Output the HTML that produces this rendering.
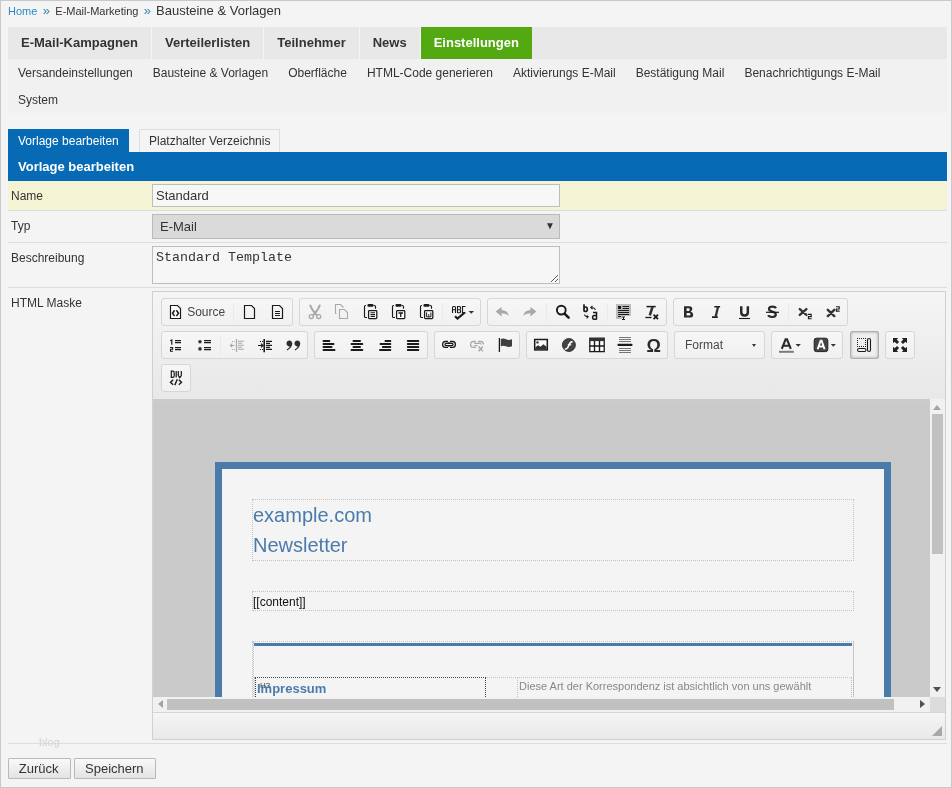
<!DOCTYPE html>
<html><head><meta charset="utf-8"><title>Bausteine &amp; Vorlagen</title>
<style>
*{box-sizing:border-box;margin:0;padding:0}
html,body{width:952px;height:788px;overflow:hidden}
body{font-family:"Liberation Sans",sans-serif;background:#f4f4f4;color:#333;position:relative}
#wrap{position:absolute;left:0;top:0;width:952px;height:788px;will-change:transform}
.a{position:absolute}
.t{position:absolute;white-space:nowrap;line-height:1}
#frame{left:0;top:0;width:952px;height:788px;border:1px solid #c9c9c9;pointer-events:none;z-index:50}
/* breadcrumb */
.bc{font-size:11px;top:5.7px}
.bc a{color:#2d8ac8;text-decoration:none}
/* main nav */
#nav{left:8px;top:27px;width:939px;height:32px;background:#e8e8e8}
#nav div{float:left;height:32px;padding:0 13px;border-right:1px solid #f4f4f4;font-weight:bold;font-size:13px;line-height:32px;color:#333}
#nav div.on{background:#52a912;color:#fff;border-right:0}
#sub{left:8px;top:59px;width:939px;height:54px;background:#f1f1f1}
#sub div{float:left;padding:0 10px;font-size:12px;height:27px;line-height:27px;color:#333;position:relative;top:1px}
/* tabs */
.tab{top:129px;height:24px;font-size:12px;line-height:23px;padding:0 9px;border:1px solid #ddd;border-bottom:0;color:#333;background:#f4f4f4}
.tab.on{background:#066bb4;border-color:#066bb4;color:#fff}
#hdr{left:8px;top:152px;width:939px;height:29px;background:#066bb4;color:#fff;font-weight:bold;font-size:13px}
.row{left:8px;width:939px;border-bottom:1px solid #ddd}
.lbl{font-size:12px;left:11px}
.inp{left:152px;width:408px;border:1px solid #bdbdbd;background:#f6f6f6}
.btn{border:1px solid #b9b9b9;border-radius:1px;background:linear-gradient(#f9f9f9,#e3e3e3)}
.db{border:1px dotted #c4c4c4}
.g{position:absolute;height:28px;border:1px solid #d6d6d6;border-radius:3px;background:linear-gradient(#f6f6f6,#f1f1f1)}
.ic{position:absolute;height:16px;line-height:0}
.ic svg{display:block}
.sp{position:absolute;width:1px;height:18px;background:#e9e9e9}
</style></head><body><div id="wrap">
<div id="frame" class="a"></div>

<!-- breadcrumb -->
<div class="t bc" style="left:8px"><a>Home</a></div>
<div class="t" style="left:42.7px;top:4px;font-size:13px;color:#3584b8">&raquo;</div>
<div class="t bc" style="left:55.3px;color:#333">E-Mail-Marketing</div>
<div class="t" style="left:143.8px;top:4px;font-size:13px;color:#3584b8">&raquo;</div>
<div class="t" style="left:156px;top:4px;font-size:13px;color:#333">Bausteine &amp; Vorlagen</div>

<!-- main nav -->
<div id="nav" class="a">
  <div>E-Mail-Kampagnen</div><div>Verteilerlisten</div><div>Teilnehmer</div><div>News</div><div class="on">Einstellungen</div>
</div>
<div id="sub" class="a">
  <div>Versandeinstellungen</div><div>Bausteine &amp; Vorlagen</div><div>Oberfläche</div><div>HTML-Code generieren</div><div>Aktivierungs E-Mail</div><div>Bestätigung Mail</div><div>Benachrichtigungs E-Mail</div><div>System</div>
</div>

<!-- tabs -->
<div class="a tab on" style="left:8px">Vorlage bearbeiten</div>
<div class="a tab" style="left:139px">Platzhalter Verzeichnis</div>
<div id="hdr" class="a"><span class="t" style="left:10px;top:8px">Vorlage bearbeiten</span></div>

<!-- form rows -->
<div class="a row" style="top:181px;height:30px;background:#f4f4d4;border-bottom-color:#ddd"></div>
<div class="a row" style="top:211px;height:32px"></div>
<div class="a row" style="top:243px;height:45px"></div>
<div class="a row" style="top:288px;height:456px"></div>
<div class="t lbl" style="top:189.5px">Name</div>
<div class="t lbl" style="top:219.5px">Typ</div>
<div class="t lbl" style="top:251.5px">Beschreibung</div>
<div class="t lbl" style="top:296.5px">HTML Maske</div>

<div class="a inp" style="top:184px;height:23px;background:#f7f7f7"></div>
<div class="t" style="left:156px;top:189px;font-size:13px">Standard</div>
<div class="a inp" style="top:214px;height:25px;background:#dadada;border-color:#bababa"></div>
<div class="t" style="left:160px;top:220px;font-size:13px">E-Mail</div>
<div class="t" style="left:545px;top:220.5px;font-size:10px;color:#333">&#9660;</div>
<div class="a inp" style="top:246px;height:38px"></div>
<div class="t" style="left:156px;top:251px;font-size:13.333px;font-family:'Liberation Mono',monospace">Standard Template</div>
<svg class="a" style="left:550px;top:274px" width="10" height="10" viewBox="0 0 10 10" shape-rendering="crispEdges"><rect x="2" y="7" width="1" height="1" fill="#fff"/><rect x="1" y="8" width="1" height="1" fill="#fff"/><rect x="3" y="6" width="1" height="1" fill="#fff"/><rect x="2" y="7" width="1" height="1" fill="#fff"/><rect x="4" y="5" width="1" height="1" fill="#fff"/><rect x="3" y="6" width="1" height="1" fill="#fff"/><rect x="5" y="4" width="1" height="1" fill="#fff"/><rect x="4" y="5" width="1" height="1" fill="#fff"/><rect x="6" y="3" width="1" height="1" fill="#fff"/><rect x="5" y="4" width="1" height="1" fill="#fff"/><rect x="7" y="2" width="1" height="1" fill="#fff"/><rect x="6" y="3" width="1" height="1" fill="#fff"/><rect x="8" y="1" width="1" height="1" fill="#fff"/><rect x="7" y="2" width="1" height="1" fill="#fff"/><rect x="6" y="7" width="1" height="1" fill="#fff"/><rect x="5" y="8" width="1" height="1" fill="#fff"/><rect x="7" y="6" width="1" height="1" fill="#fff"/><rect x="6" y="7" width="1" height="1" fill="#fff"/><rect x="8" y="5" width="1" height="1" fill="#fff"/><rect x="7" y="6" width="1" height="1" fill="#fff"/><rect x="1" y="7" width="1" height="1" fill="#555"/><rect x="2" y="6" width="1" height="1" fill="#555"/><rect x="3" y="5" width="1" height="1" fill="#555"/><rect x="4" y="4" width="1" height="1" fill="#555"/><rect x="5" y="3" width="1" height="1" fill="#555"/><rect x="6" y="2" width="1" height="1" fill="#555"/><rect x="7" y="1" width="1" height="1" fill="#555"/><rect x="5" y="7" width="1" height="1" fill="#555"/><rect x="6" y="6" width="1" height="1" fill="#555"/><rect x="7" y="5" width="1" height="1" fill="#555"/></svg>

<!-- editor -->
<div class="a" style="left:152px;top:291px;width:794px;height:449px;border:1px solid #d0d0d0;background:#f0f0f0"></div>
<div class="a" style="left:153px;top:292px;width:792px;height:107px;background:linear-gradient(#f5f5f5,#e8e8e8 99%,#ececec)"></div>
<!--TB-->
<div class="g" style="left:161px;top:298px;width:132px;"></div>
<div class="ic" style="left:168px;top:304px;width:16px"><svg width="16" height="16" viewBox="0 0 16 16" shape-rendering="geometricPrecision"><path d="M2.5 1.5H9.5L12.5 4.5V14.5H2.5Z" fill="#fff" stroke="#1a1a1a" stroke-width="1.2"/><path d="M6.6 6.3L4.5 9.2L6.6 12.1M8.4 6.3L10.5 9.2L8.4 12.1" fill="none" stroke="#1a1a1a" stroke-width="1.5"/></svg></div>
<div class="t" style="left:187.2px;top:306px;font-size:12px;color:#474747">Source</div>
<div class="sp" style="left:233px;top:303px"></div>
<div class="ic" style="left:242px;top:304px;width:16px"><svg width="16" height="16" viewBox="0 0 16 16" shape-rendering="geometricPrecision"><path d="M2.5 1.5H9.5L12.5 4.5V14.5H2.5Z" fill="none" stroke="#1a1a1a" stroke-width="1.2"/></svg></div>
<div class="ic" style="left:270px;top:304px;width:16px"><svg width="16" height="16" viewBox="0 0 16 16" shape-rendering="geometricPrecision"><path d="M2.5 1.5H9.5L12.5 4.5V14.5H2.5Z" fill="none" stroke="#1a1a1a" stroke-width="1.2"/><path d="M5 7.5H10M5 9.5H10M5 11.5H10" stroke="#1a1a1a" stroke-width="1.1"/></svg></div>
<div class="g" style="left:299px;top:298px;width:182px;"></div>
<div class="ic" style="left:306px;top:304px;width:16px"><svg width="16" height="16" viewBox="0 0 16 16" shape-rendering="geometricPrecision"><path d="M4.3 1.5L6 5L8.5 8.6L10.5 10.8M13.7 1.5L12 5L9.5 8.6L7.5 10.8" stroke="#a9a9a9" stroke-width="2" fill="none" stroke-linecap="round"/><circle cx="5.3" cy="12.6" r="2" fill="#f4f4f4" stroke="#a9a9a9" stroke-width="1.4"/><circle cx="12.7" cy="12.6" r="2" fill="#f4f4f4" stroke="#a9a9a9" stroke-width="1.4"/></svg></div>
<div class="ic" style="left:334px;top:304px;width:16px"><svg width="16" height="16" viewBox="0 0 16 16" shape-rendering="geometricPrecision"><path d="M2.5 9.5H1.5V0.5H6.5L9.5 3.5" fill="none" stroke="#a9a9a9" stroke-width="1.1"/><path d="M5.5 14.5V5.5H10.5L13.5 8.5V14.5Z" fill="none" stroke="#a9a9a9" stroke-width="1.1"/></svg></div>
<div class="ic" style="left:362px;top:304px;width:16px"><svg width="16" height="16" viewBox="0 0 16 16" shape-rendering="geometricPrecision"><path d="M4 1.5H3.6Q2.5 1.5 2.5 2.6V12.4Q2.5 13.5 3.6 13.5H5M11.8 1.5H12.4Q13.5 1.5 13.5 2.6V4.8" fill="none" stroke="#1a1a1a" stroke-width="1.15"/><rect x="5.4" y="0" width="6.2" height="2.7" rx="1.3" fill="#1a1a1a"/><rect x="6.6" y="6.6" width="8.2" height="8" rx="0.8" fill="#fff" stroke="#1a1a1a" stroke-width="1.25"/><path d="M8.5 8.8H13M8.5 10.6H13M8.5 12.4H13" stroke="#1a1a1a" stroke-width="1.05"/></svg></div>
<div class="ic" style="left:390px;top:304px;width:16px"><svg width="16" height="16" viewBox="0 0 16 16" shape-rendering="geometricPrecision"><path d="M4 1.5H3.6Q2.5 1.5 2.5 2.6V12.4Q2.5 13.5 3.6 13.5H5M11.8 1.5H12.4Q13.5 1.5 13.5 2.6V4.8" fill="none" stroke="#1a1a1a" stroke-width="1.15"/><rect x="5.4" y="0" width="6.2" height="2.7" rx="1.3" fill="#1a1a1a"/><rect x="6.6" y="6.6" width="8.2" height="8" rx="0.8" fill="#fff" stroke="#1a1a1a" stroke-width="1.25"/><path d="M8.5 9H13M10.75 9V13" stroke="#1a1a1a" stroke-width="1.3"/></svg></div>
<div class="ic" style="left:418px;top:304px;width:16px"><svg width="16" height="16" viewBox="0 0 16 16" shape-rendering="geometricPrecision"><path d="M4 1.5H3.6Q2.5 1.5 2.5 2.6V12.4Q2.5 13.5 3.6 13.5H5M11.8 1.5H12.4Q13.5 1.5 13.5 2.6V4.8" fill="none" stroke="#1a1a1a" stroke-width="1.15"/><rect x="5.4" y="0" width="6.2" height="2.7" rx="1.3" fill="#1a1a1a"/><rect x="6.6" y="6.6" width="8.2" height="8" rx="0.8" fill="#fff" stroke="#1a1a1a" stroke-width="1.25"/><path d="M8.6 8.4V12.9H12.9V8.4M10.75 10.2V12.9" fill="none" stroke="#1a1a1a" stroke-width="1"/></svg></div>
<div class="sp" style="left:442px;top:303px"></div>
<div class="ic" style="left:451px;top:304px;width:24px"><svg width="24" height="16" viewBox="0 0 24 16" shape-rendering="geometricPrecision"><path d="M1.5 9V3.5Q1.5 2.5 2.5 2.5H3.5Q4.5 2.5 4.5 3.5V9M1.5 5.8H4.5" fill="none" stroke="#1a1a1a" stroke-width="1.1"/><path d="M6.5 9V2.5H8.5Q9.5 2.5 9.5 3.5V4.6Q9.5 5.7 8.5 5.7H6.5M8.5 5.7Q9.5 5.7 9.5 6.8V8Q9.5 8.8 8.5 8.8H6.5" fill="none" stroke="#1a1a1a" stroke-width="1.1"/><path d="M14.5 2.5H11.5V8.8H14.5" fill="none" stroke="#1a1a1a" stroke-width="1.1"/><path d="M4 12.3L6.5 14.6L13.8 8.5" fill="none" stroke="#1a1a1a" stroke-width="2.1"/><path d="M17.5 7H23L20.25 9.7Z" fill="#333"/></svg></div>
<div class="g" style="left:487px;top:298px;width:180px;"></div>
<div class="ic" style="left:494px;top:304px;width:16px"><svg width="16" height="16" viewBox="0 0 16 16" shape-rendering="geometricPrecision"><path d="M1.5 7.6L7.6 3V6Q13.5 6.2 14.8 11.8Q12.5 9.2 7.6 9.3V12.6Z" fill="#a9a9a9"/></svg></div>
<div class="ic" style="left:522px;top:304px;width:16px"><svg width="16" height="16" viewBox="0 0 16 16" shape-rendering="geometricPrecision"><path d="M14.5 7.6L8.4 3V6Q2.5 6.2 1.2 11.8Q3.5 9.2 8.4 9.3V12.6Z" fill="#a9a9a9"/></svg></div>
<div class="sp" style="left:546px;top:303px"></div>
<div class="ic" style="left:555px;top:304px;width:16px"><svg width="16" height="16" viewBox="0 0 16 16" shape-rendering="geometricPrecision"><circle cx="6.3" cy="6.1" r="4.4" fill="none" stroke="#1a1a1a" stroke-width="1.9"/><path d="M9.8 9.8L13.6 13.6" stroke="#1a1a1a" stroke-width="2.6" stroke-linecap="round"/></svg></div>
<div class="ic" style="left:583px;top:304px;width:16px"><svg width="16" height="16" viewBox="0 0 16 16" shape-rendering="geometricPrecision"><path d="M1 0.3V7.5M1 4.5Q1 3 2.6 3Q4.3 3 4.3 5.2Q4.3 7.5 2.6 7.5Q1 7.5 1 6" fill="none" stroke="#1a1a1a" stroke-width="1.7"/><path d="M10 8.5H13.5V15.5M13.5 11.5H11.2Q9.6 11.5 9.6 13.4Q9.6 15.3 11.2 15.3H13.5" fill="none" stroke="#1a1a1a" stroke-width="1.5"/><path d="M9.5 1.8L7.8 3.5L9.5 5M8 3.5Q11.5 3.3 12.5 5.7" fill="none" stroke="#1a1a1a" stroke-width="1.1"/><path d="M1.5 10.5Q2 12.8 4.8 12.8M3.6 11.3L5.2 12.8L3.6 14.3" fill="none" stroke="#1a1a1a" stroke-width="1.1"/></svg></div>
<div class="sp" style="left:607px;top:303px"></div>
<div class="ic" style="left:616px;top:304px;width:16px"><svg width="16" height="16" viewBox="0 0 16 16" shape-rendering="geometricPrecision"><path d="M0 0H15V12H6V15H0Z" fill="#bdbdbd"/><rect x="2" y="2" width="3" height="3" fill="#1a1a1a"/><path d="M6.5 2.5H13M6.5 4.5H13M2 6.5H13M2 8.5H13M2 10.5H13M2 12.5H5" stroke="#1a1a1a" stroke-width="1.2"/><path d="M6 13H9M7.5 13V15.5M6 15.5H9" stroke="#1a1a1a" stroke-width="1"/></svg></div>
<div class="ic" style="left:644px;top:304px;width:16px"><svg width="16" height="16" viewBox="0 0 16 16" shape-rendering="geometricPrecision"><path d="M2.5 2.6H11.7" stroke="#1a1a1a" stroke-width="1.5"/><path d="M8.6 2.6L5.8 11.3" stroke="#333" stroke-width="2.6"/><path d="M1.3 13.5H7.6" stroke="#1a1a1a" stroke-width="1.3"/><path d="M9.6 10.6L14 15.2M14 10.6L9.6 15.2" stroke="#1a1a1a" stroke-width="1.7"/></svg></div>
<div class="g" style="left:673px;top:298px;width:175px;"></div>
<div class="ic" style="left:680px;top:304px;width:16px"><svg width="16" height="16" viewBox="0 0 16 16" shape-rendering="geometricPrecision"><path d="M4 2.3H9.2Q12.3 2.3 12.3 5Q12.3 6.9 10.6 7.6Q13.2 8.3 13.2 10.7Q13.2 13.6 9.6 13.6H4Z M6.6 4.3V6.9H8.9Q9.7 6.9 9.7 5.6Q9.7 4.3 8.9 4.3Z M6.6 8.9V11.6H9.1Q10.5 11.6 10.5 10.25Q10.5 8.9 9.1 8.9Z" fill="#2a2a2a" fill-rule="evenodd"/></svg></div>
<div class="ic" style="left:708px;top:304px;width:16px"><svg width="16" height="16" viewBox="0 0 16 16" shape-rendering="geometricPrecision"><path d="M6.3 2.8H12.1M4 13.1H9.8" stroke="#222" stroke-width="1.6"/><path d="M10 2.8L7.6 13.1" stroke="#333" stroke-width="2.3"/></svg></div>
<div class="ic" style="left:736px;top:304px;width:16px"><svg width="16" height="16" viewBox="0 0 16 16" shape-rendering="geometricPrecision"><path d="M5.25 2.3V8.6Q5.25 11.5 8.55 11.5Q11.85 11.5 11.85 8.6V2.3" stroke="#2a2a2a" stroke-width="2.5" fill="none"/><path d="M3 14.5H14" stroke="#1a1a1a" stroke-width="1.1"/></svg></div>
<div class="ic" style="left:764px;top:304px;width:16px"><svg width="16" height="16" viewBox="0 0 16 16" shape-rendering="geometricPrecision"><path d="M12 4.2Q11.3 2.7 8.4 2.7Q5 2.7 5 5Q5 6.8 8.3 7.6Q11.8 8.4 11.8 10.6Q11.8 13 8.2 13Q4.9 13 4.2 11.2" fill="none" stroke="#2a2a2a" stroke-width="2.2"/><path d="M2 8.3H15" stroke="#1a1a1a" stroke-width="1.2"/></svg></div>
<div class="sp" style="left:788px;top:303px"></div>
<div class="ic" style="left:797px;top:304px;width:16px"><svg width="16" height="16" viewBox="0 0 16 16" shape-rendering="geometricPrecision"><path d="M2.8 5.1L9.4 10.9M9.4 5.1L2.8 10.9" stroke="#333" stroke-width="2.4" stroke-linecap="round"/><path d="M11 10.4H14.2V12.600000000000001H11.4V14.7H14.6" fill="none" stroke="#1a1a1a" stroke-width="1.1"/></svg></div>
<div class="ic" style="left:825px;top:304px;width:16px"><svg width="16" height="16" viewBox="0 0 16 16" shape-rendering="geometricPrecision"><path d="M2.8 5.8L9.3 12.1M9.3 5.8L2.8 12.1" stroke="#333" stroke-width="2.4" stroke-linecap="round"/><path d="M11 2.8H14.2V5.0H11.4V7.1H14.6" fill="none" stroke="#1a1a1a" stroke-width="1.1"/></svg></div>
<div class="g" style="left:161px;top:331px;width:147px;"></div>
<div class="ic" style="left:168px;top:337px;width:16px"><svg width="16" height="16" viewBox="0 0 16 16" shape-rendering="geometricPrecision"><path d="M2.2 3.8L3.8 3V7.8" stroke="#1a1a1a" stroke-width="1.2" fill="none"/><path d="M2 10.5H4.6V12.3H2.5V14.3H5" stroke="#1a1a1a" stroke-width="1.1" fill="none"/><path d="M7 3.6H13M7 5.6H13M7 10.6H13M7 12.6H13" stroke="#1a1a1a" stroke-width="1.3"/></svg></div>
<div class="ic" style="left:196px;top:337px;width:16px"><svg width="16" height="16" viewBox="0 0 16 16" shape-rendering="geometricPrecision"><circle cx="4" cy="4.8" r="1.8" fill="#333"/><circle cx="4" cy="11.9" r="1.8" fill="#333"/><path d="M8 3.6H15M8 5.6H15M8 10.6H15M8 12.6H15" stroke="#1a1a1a" stroke-width="1.3"/></svg></div>
<div class="sp" style="left:220px;top:336px"></div>
<div class="ic" style="left:229px;top:337px;width:16px"><svg width="16" height="16" viewBox="0 0 16 16" shape-rendering="geometricPrecision"><path d="M1 8.5H5.5M3.3 6.6L1.3 8.5L3.3 10.4" stroke="#a9a9a9" fill="none" stroke-width="1.1"/><path d="M3 4.5H4M5 4.5H6M3 12.5H4M5 12.5H6" stroke="#a9a9a9"/><path d="M7.5 2V15" stroke="#a9a9a9" stroke-width="1.2"/><path d="M9 4.3H15M9 6.3H13M9 8.3H15M9 10.3H13M9 12.3H15" stroke="#a9a9a9" stroke-width="1.1"/></svg></div>
<div class="ic" style="left:257px;top:337px;width:16px"><svg width="16" height="16" viewBox="0 0 16 16" shape-rendering="geometricPrecision"><path d="M1 8.5H5.8M4 6.6L6 8.5L4 10.4" stroke="#1a1a1a" fill="none" stroke-width="1.2"/><path d="M3 4.5H4M5 4.5H6M3 12.5H4M5 12.5H6" stroke="#1a1a1a"/><path d="M7.2 2V15.2" stroke="#1a1a1a" stroke-width="1.6"/><path d="M9 4.3H15M9 6.3H13M9 8.3H15M9 10.3H13M9 12.3H15" stroke="#1a1a1a" stroke-width="1.3"/></svg></div>
<div class="ic" style="left:285px;top:337px;width:16px"><svg width="16" height="16" viewBox="0 0 16 16" shape-rendering="geometricPrecision"><path d="M4.4 3.5C6.2 3.5 7.3 4.9 7.3 6.6C7.3 9.5 5 12 2.3 13.5L1.6 12.7C3.3 11.6 4.4 10.3 4.7 9.5C2.8 9.4 1.5 8.2 1.5 6.5C1.5 4.8 2.8 3.5 4.4 3.5Z" fill="#2d2d2d"/><g transform="translate(8 0)"><path d="M4.4 3.5C6.2 3.5 7.3 4.9 7.3 6.6C7.3 9.5 5 12 2.3 13.5L1.6 12.7C3.3 11.6 4.4 10.3 4.7 9.5C2.8 9.4 1.5 8.2 1.5 6.5C1.5 4.8 2.8 3.5 4.4 3.5Z" fill="#2d2d2d"/></g></svg></div>
<div class="g" style="left:314px;top:331px;width:114px;"></div>
<div class="ic" style="left:321px;top:337px;width:16px"><svg width="16" height="16" viewBox="0 0 16 16" shape-rendering="geometricPrecision"><path d="M2.5 4H8.3" stroke="#1a1a1a" stroke-width="2" stroke-linecap="round"/><path d="M2.5 7H12.5" stroke="#1a1a1a" stroke-width="2" stroke-linecap="round"/><path d="M2.5 10H10.5" stroke="#1a1a1a" stroke-width="2" stroke-linecap="round"/><path d="M2.5 13H13.5" stroke="#1a1a1a" stroke-width="2" stroke-linecap="round"/></svg></div>
<div class="ic" style="left:349px;top:337px;width:16px"><svg width="16" height="16" viewBox="0 0 16 16" shape-rendering="geometricPrecision"><path d="M4.5 4H11" stroke="#1a1a1a" stroke-width="2" stroke-linecap="round"/><path d="M2.5 7H13.3" stroke="#1a1a1a" stroke-width="2" stroke-linecap="round"/><path d="M4.5 10H11" stroke="#1a1a1a" stroke-width="2" stroke-linecap="round"/><path d="M2.5 13H13.3" stroke="#1a1a1a" stroke-width="2" stroke-linecap="round"/></svg></div>
<div class="ic" style="left:377px;top:337px;width:16px"><svg width="16" height="16" viewBox="0 0 16 16" shape-rendering="geometricPrecision"><path d="M8.5 4H13.3" stroke="#1a1a1a" stroke-width="2" stroke-linecap="round"/><path d="M3.5 7H13.3" stroke="#1a1a1a" stroke-width="2" stroke-linecap="round"/><path d="M5.8 10H13.3" stroke="#1a1a1a" stroke-width="2" stroke-linecap="round"/><path d="M3 13H13.3" stroke="#1a1a1a" stroke-width="2" stroke-linecap="round"/></svg></div>
<div class="ic" style="left:405px;top:337px;width:16px"><svg width="16" height="16" viewBox="0 0 16 16" shape-rendering="geometricPrecision"><path d="M2.8 4H13.3" stroke="#1a1a1a" stroke-width="2" stroke-linecap="round"/><path d="M2.8 7H13.3" stroke="#1a1a1a" stroke-width="2" stroke-linecap="round"/><path d="M2.8 10H13.3" stroke="#1a1a1a" stroke-width="2" stroke-linecap="round"/><path d="M2.8 13H13.3" stroke="#1a1a1a" stroke-width="2" stroke-linecap="round"/></svg></div>
<div class="g" style="left:434px;top:331px;width:86px;"></div>
<div class="ic" style="left:441px;top:337px;width:16px"><svg width="16" height="16" viewBox="0 0 16 16" shape-rendering="geometricPrecision"><path d="M7 4.5H4.4Q1.6 4.5 1.6 7.45Q1.6 10.4 4.4 10.4H7M9 4.5H11.6Q14.4 4.5 14.4 7.45Q14.4 10.4 11.6 10.4H9" fill="none" stroke="#1a1a1a" stroke-width="1.3"/><rect x="4" y="6.3" width="8" height="2.3" rx="1.15" fill="none" stroke="#1a1a1a" stroke-width="1.25"/><path d="M8 5V6.5M8 8.4V9.8" stroke="#1a1a1a" stroke-width="1.4"/></svg></div>
<div class="ic" style="left:469px;top:337px;width:16px"><svg width="16" height="16" viewBox="0 0 16 16" shape-rendering="geometricPrecision"><path d="M7 4.5H4.4Q1.6 4.5 1.6 7.45Q1.6 10.4 4.4 10.4H7M9 4.5H11.6Q14.4 4.5 14.4 7.45" fill="none" stroke="#a9a9a9" stroke-width="1.3"/><path d="M5.2 6.3H10.8Q12 6.3 12 7.45" fill="none" stroke="#a9a9a9" stroke-width="1.2"/><path d="M5.2 8.6H8.5" stroke="#a9a9a9" stroke-width="1.2"/><path d="M9.6 9.6L13.8 14.2M13.8 9.6L9.6 14.2" stroke="#a9a9a9" stroke-width="1.5"/></svg></div>
<div class="ic" style="left:497px;top:337px;width:16px"><svg width="16" height="16" viewBox="0 0 16 16" shape-rendering="geometricPrecision"><path d="M2.4 1V15" stroke="#1a1a1a" stroke-width="1.3"/><path d="M3.8 2Q6.5 0.8 9 2.3Q11.8 3.6 15 2.2V9.3Q11.8 10.7 9 9.3Q6.5 8 3.8 9.3Z" fill="#3d3d3d"/></svg></div>
<div class="g" style="left:526px;top:331px;width:142px;"></div>
<div class="ic" style="left:533px;top:337px;width:16px"><svg width="16" height="16" viewBox="0 0 16 16" shape-rendering="geometricPrecision"><rect x="1.7" y="2.5" width="12.6" height="10.4" fill="#fff" stroke="#1a1a1a" stroke-width="1.5"/><circle cx="4.5" cy="5.4" r="1.2" fill="#333"/><path d="M2.4 12.2V10.3L5 8.2L7.5 9.8L10.4 7.3L13.6 9.7V12.2Z" fill="#333"/></svg></div>
<div class="ic" style="left:561px;top:337px;width:16px"><svg width="16" height="16" viewBox="0 0 16 16" shape-rendering="geometricPrecision"><circle cx="7.9" cy="8" r="6.5" fill="#444" stroke="#222" stroke-width="0.8"/><path d="M3.8 12Q6.5 12.3 7.6 8.8Q8.6 5.3 11.6 4.6" stroke="#fff" stroke-width="1.5" fill="none"/><path d="M6.8 7.8H10.2" stroke="#fff" stroke-width="1.3"/></svg></div>
<div class="ic" style="left:589px;top:337px;width:16px"><svg width="16" height="16" viewBox="0 0 16 16" shape-rendering="geometricPrecision"><rect x="0.8" y="1.2" width="14.4" height="13.4" fill="#fff" stroke="#1a1a1a" stroke-width="1.3"/><path d="M0.8 2.7H15.2" stroke="#333" stroke-width="2.8"/><path d="M0.8 9H15.2M5.5 4V14.6M10.5 4V14.6" stroke="#1a1a1a" stroke-width="1.4"/></svg></div>
<div class="ic" style="left:617px;top:337px;width:16px"><svg width="16" height="16" viewBox="0 0 16 16" shape-rendering="geometricPrecision"><path d="M2 0.5H14M2 2.5H14M2 4.5H14M2 11.5H14M2 13.5H14M2 15.5H14" stroke="#555" stroke-width="0.8"/><path d="M1.5 7.9H14.5" stroke="#1a1a1a" stroke-width="2.1" stroke-linecap="round"/></svg></div>
<div class="ic" style="left:645px;top:337px;width:16px"><svg width="16" height="16" viewBox="0 0 16 16" shape-rendering="geometricPrecision"><text x="8.7" y="14.8" text-anchor="middle" font-family="Liberation Sans" font-size="18" font-weight="bold" fill="#2a2a2a">&#937;</text></svg></div>
<div class="g" style="left:674px;top:331px;width:91px;"></div>
<div class="t" style="left:685px;top:339px;font-size:12px;color:#484848">Format</div>
<div class="a" style="left:752.4px;top:344px;width:0;height:0;border-left:2.6px solid transparent;border-right:2.6px solid transparent;border-top:3px solid #333"></div>
<div class="g" style="left:771px;top:331px;width:72px;"></div>
<div class="ic" style="left:778px;top:337px;width:24px"><svg width="24" height="16" viewBox="0 0 24 16" shape-rendering="geometricPrecision"><path d="M3.8 11.8L7.6 2.4H9L12.8 11.8M5.4 8.8H11.2" fill="none" stroke="#2a2a2a" stroke-width="2.1"/><path d="M1 14.8H15.8" stroke="#7a7a7a" stroke-width="2"/><path d="M17.5 7H22.9L20.2 9.8Z" fill="#333"/></svg></div>
<div class="ic" style="left:813px;top:337px;width:24px"><svg width="24" height="16" viewBox="0 0 24 16" shape-rendering="geometricPrecision"><rect x="1.2" y="1.2" width="13.6" height="13.4" rx="2.2" fill="#444" stroke="#222" stroke-width="1"/><path d="M4.6 12.2L7.6 3.6H8.6L11.6 12.2M5.8 9.5H10.4" fill="none" stroke="#fff" stroke-width="1.9"/><path d="M17.8 7H22.8L20.3 9.8Z" fill="#333"/></svg></div>
<div class="g" style="left:850px;top:331px;width:29px;border-color:#b0b0b0;border-radius:2px;background:#efefef;box-shadow:inset 0 0 3px #999"></div>
<div class="ic" style="left:856px;top:337px;width:16px"><svg width="16" height="16" viewBox="0 0 16 16" shape-rendering="geometricPrecision"><rect x="1" y="1" width="1" height="1" fill="#222"/><rect x="1" y="9" width="1" height="1" fill="#222"/><rect x="1" y="1" width="1" height="1" fill="#222"/><rect x="9" y="1" width="1" height="1" fill="#222"/><rect x="3" y="1" width="1" height="1" fill="#222"/><rect x="3" y="9" width="1" height="1" fill="#222"/><rect x="1" y="3" width="1" height="1" fill="#222"/><rect x="9" y="3" width="1" height="1" fill="#222"/><rect x="5" y="1" width="1" height="1" fill="#222"/><rect x="5" y="9" width="1" height="1" fill="#222"/><rect x="1" y="5" width="1" height="1" fill="#222"/><rect x="9" y="5" width="1" height="1" fill="#222"/><rect x="7" y="1" width="1" height="1" fill="#222"/><rect x="7" y="9" width="1" height="1" fill="#222"/><rect x="1" y="7" width="1" height="1" fill="#222"/><rect x="9" y="7" width="1" height="1" fill="#222"/><rect x="9" y="1" width="1" height="1" fill="#222"/><rect x="9" y="9" width="1" height="1" fill="#222"/><rect x="1" y="9" width="1" height="1" fill="#222"/><rect x="9" y="9" width="1" height="1" fill="#222"/><rect x="1.5" y="11.5" width="8.5" height="3" rx="1.5" fill="none" stroke="#1a1a1a" stroke-width="1.1"/><rect x="11.5" y="1.5" width="3" height="13" rx="1.5" fill="none" stroke="#1a1a1a" stroke-width="1.1"/></svg></div>
<div class="g" style="left:885px;top:331px;width:30px;"></div>
<div class="ic" style="left:892px;top:337px;width:16px"><svg width="16" height="16" viewBox="0 0 16 16" shape-rendering="geometricPrecision"><path d="M1 1H6.3L4.7 2.6L7.1 5L5 7.1L2.6 4.7L1 6.3Z" fill="#222" transform=""/><path d="M1 1H6.3L4.7 2.6L7.1 5L5 7.1L2.6 4.7L1 6.3Z" fill="#222" transform="matrix(-1 0 0 1 16 0)"/><path d="M1 1H6.3L4.7 2.6L7.1 5L5 7.1L2.6 4.7L1 6.3Z" fill="#222" transform="matrix(1 0 0 -1 0 16)"/><path d="M1 1H6.3L4.7 2.6L7.1 5L5 7.1L2.6 4.7L1 6.3Z" fill="#222" transform="matrix(-1 0 0 -1 16 16)"/></svg></div>
<div class="g" style="left:161px;top:364px;width:30px;"></div>
<div class="ic" style="left:168px;top:370px;width:16px"><svg width="16" height="16" viewBox="0 0 16 16" shape-rendering="geometricPrecision"><path d="M3.3 1.2V7.4H4.6Q6.2 7.4 6.2 5.8V2.8Q6.2 1.2 4.6 1.2Z" fill="none" stroke="#1a1a1a" stroke-width="1.2"/><path d="M8.2 1V7.6" stroke="#1a1a1a" stroke-width="1.2"/><path d="M10.3 1V5.5L11.8 7.6L13.3 5.5V1" fill="none" stroke="#1a1a1a" stroke-width="1.2"/><path d="M5.2 9.8L2.5 12.3L5.2 14.7M10.8 9.8L13.5 12.3L10.8 14.7M9.3 9.3L6.8 15.1" fill="none" stroke="#1a1a1a" stroke-width="1.4"/></svg></div>
<!--/TB-->
<div class="a" style="left:153px;top:399px;width:777px;height:298px;overflow:hidden;background:#cacaca">
  <div class="a" style="left:0;top:1px;width:777px;height:0;border-top:1px dotted #d0d0d0"></div>
  <div class="a" style="left:0;top:1px;width:0;height:300px;border-left:1px dotted #d0d0d0"></div>
  <div class="a" style="left:62px;top:63px;width:676px;height:400px;border:7px solid #4a7bab;background:#f4f4f4"></div>
  <div class="a db" style="left:99px;top:100px;width:602px;height:62px"></div>
  <div class="t" style="left:100px;top:106px;font-size:20px;color:#4a7bab">example.com</div>
  <div class="t" style="left:100px;top:136px;font-size:20px;color:#4a7bab">Newsletter</div>
  <div class="a db" style="left:99px;top:192px;width:602px;height:20px"></div>
  <div class="t" style="left:100px;top:197px;font-size:12px;color:#111">[[content]]</div>
  <div class="a db" style="left:99px;top:242px;width:602px;height:80px"></div>
  <div class="a" style="left:100px;top:243px;width:601px;height:80px;border-left:1px dotted #c4c4c4;border-right:1px dotted #c4c4c4"></div>
  <div class="a" style="left:101px;top:244px;width:598px;height:3px;background:#4a7bab"></div>
  <div class="a db" style="left:101px;top:278px;width:598px;height:40px"></div>
  <div class="a" style="left:102px;top:278px;width:231px;height:40px;border:1px dotted #444"></div>
  <div class="a db" style="left:364px;top:278px;width:335px;height:40px"></div>
  <div class="t" style="left:107px;top:283px;font-size:8px;color:#333">H3</div>
  <div class="t" style="left:104px;top:283px;font-size:13px;font-weight:bold;color:#4a7bab">Impressum</div>
  <div class="t" style="left:366px;top:282px;font-size:11px;color:#888">Diese Art der Korrespondenz ist absichtlich von uns gewählt</div>
</div>
<!-- v scrollbar -->
<div class="a" style="left:930px;top:399px;width:15px;height:298px;background:#f1f1f1"></div>
<div class="a" style="left:933px;top:405px;width:0;height:0;border-left:4.5px solid transparent;border-right:4.5px solid transparent;border-bottom:5px solid #a3a3a3"></div>
<div class="a" style="left:932px;top:414px;width:11px;height:140px;background:#c1c1c1"></div>
<div class="a" style="left:933px;top:687px;width:0;height:0;border-left:4.5px solid transparent;border-right:4.5px solid transparent;border-top:5px solid #505050"></div>
<!-- h scrollbar -->
<div class="a" style="left:153px;top:697px;width:777px;height:15px;background:#f1f1f1"></div>
<div class="a" style="left:158px;top:700px;width:0;height:0;border-top:4.5px solid transparent;border-bottom:4.5px solid transparent;border-right:5px solid #a3a3a3"></div>
<div class="a" style="left:167px;top:699px;width:727px;height:11px;background:#c1c1c1"></div>
<div class="a" style="left:920px;top:700px;width:0;height:0;border-top:4.5px solid transparent;border-bottom:4.5px solid transparent;border-left:5px solid #505050"></div>
<div class="a" style="left:930px;top:697px;width:15px;height:15px;background:#dcdcdc"></div>
<!-- bottom bar -->
<div class="a" style="left:153px;top:712px;width:792px;height:27px;border-top:1px solid #d6d6d6;background:linear-gradient(#f5f5f5,#e9e9e9)"></div>
<div class="a" style="left:932px;top:726px;width:0;height:0;border-left:10px solid transparent;border-bottom:10px solid #a8a8a8"></div>

<!-- footer -->
<div class="t" style="left:39px;top:737px;font-size:11px;color:#d4d4d4">blog</div>
<div class="a btn" style="left:8px;top:758px;width:63px;height:21px"></div>
<div class="a btn" style="left:74px;top:758px;width:82px;height:21px"></div>
<div class="t" style="left:18.8px;top:762px;font-size:13px">Zurück</div>
<div class="t" style="left:85px;top:762px;font-size:13px">Speichern</div>
</div></body></html>
